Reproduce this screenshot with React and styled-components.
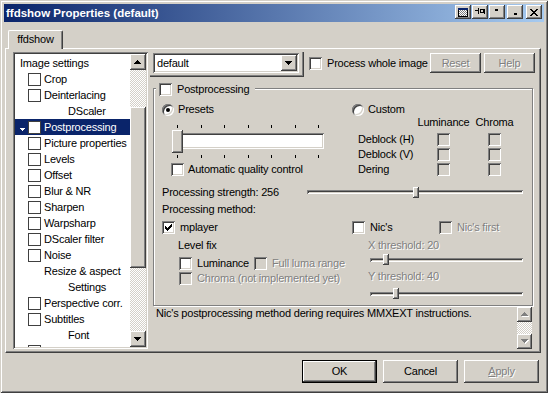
import React from "react";
import styled, { createGlobalStyle, css } from "styled-components";

const GlobalStyle = createGlobalStyle`
  * { box-sizing: border-box; }
  html, body { margin: 0; padding: 0; background: #d4d0c8; }
  body {
    font-family: "Liberation Sans", Arial, sans-serif;
    font-size: 11px;
    line-height: 13px;
    letter-spacing: -0.2px;
    color: #000;
  }
`;

const raised = css`
  background: #d4d0c8;
  box-shadow: inset -1px -1px #404040, inset 1px 1px #fff, inset -2px -2px #808080;
`;

const sunken = css`
  box-shadow: inset 1px 1px #808080, inset -1px -1px #fff, inset 2px 2px #404040,
    inset -2px -2px #d4d0c8;
`;

const disabledText = css`
  color: #808080;
  text-shadow: 1px 1px 0 #fff;
`;

const Window = styled.div`
  width: 548px;
  height: 393px;
  padding: 4px;
  background: #d4d0c8;
  box-shadow: inset 1px 1px #d4d0c8, inset -1px -1px #404040, inset 2px 2px #fff,
    inset -2px -2px #808080;
  display: flex;
  flex-direction: column;
`;

const TitleBar = styled.div`
  height: 18px;
  display: flex;
  align-items: flex-start;
  padding: 0 2px;
  background: linear-gradient(to right, #0a246a, #a6caf0);
`;

const TitleText = styled.div`
  flex: 1;
  color: #fff;
  font-weight: bold;
  font-size: 11.5px;
  line-height: 18px;
  letter-spacing: 0;
  white-space: nowrap;
`;

const TitleBtn = styled.div`
  width: 16px;
  height: 14px;
  margin-top: 1px;
  margin-left: ${p => p.$gap || 0}px;
  ${raised};
  display: flex;
  align-items: center;
  justify-content: center;
`;

const TabStrip = styled.div`
  display: flex;
  margin-top: 8px;
  padding-left: 4px;
  height: 18px;
  position: relative;
  z-index: 1;
`;

const Tab = styled.div`
  width: 55px;
  height: 19px;
  background: #d4d0c8;
  border-top: 1px solid #fff;
  border-left: 1px solid #fff;
  border-right: 1px solid #404040;
  box-shadow: inset -1px 0 #808080;
  border-radius: 2px 2px 0 0;
  display: flex;
  align-items: center;
  justify-content: center;
  padding-bottom: 1px;
`;

const TabPanel = styled.div`
  margin-left: 1px;
  width: 536px;
  height: 305px;
  border-top: 1px solid #fff;
  border-left: 1px solid #fff;
  border-right: 1px solid #404040;
  border-bottom: 1px solid #404040;
  box-shadow: inset -1px -1px #808080;
  display: flex;
  align-items: flex-start;
  padding: 3px 0 0 7px;
`;

/* ---------- left tree list ---------- */

const ListBox = styled.div`
  width: 135px;
  height: 297px;
  padding: 2px;
  background: #fff;
  ${sunken};
  display: flex;
`;

const ListItems = styled.div`
  flex: 1;
  padding-top: 1px;
  overflow: hidden;
  display: flex;
  flex-direction: column;
`;

const ListRow = styled.div`
  flex: none;
  height: 16px;
  display: flex;
  align-items: center;
  gap: 3px;
  padding-left: ${p => p.$indent}px;
  white-space: nowrap;
  background: ${p => (p.$selected ? "#0a246a" : "transparent")};
  color: ${p => (p.$selected ? "#fff" : "#000")};
`;

const ListCheck = styled.span`
  flex: none;
  width: 13px;
  height: 13px;
  background: #fff;
  border: 1px solid #404040;
`;

const SelArrow = styled.svg`
  flex: none;
  margin: 4px 0 0 0;
`;

const VScroll = styled.div`
  flex: none;
  width: ${p => p.$w}px;
  height: ${p => p.$h}px;
  margin-top: ${p => p.$top || 0}px;
  display: flex;
  flex-direction: column;
`;

const ScrollBtn = styled.div`
  flex: none;
  width: ${p => (p.$w ? `${p.$w}px` : "auto")};
  height: ${p => p.$h}px;
  ${raised};
  display: flex;
  align-items: center;
  justify-content: center;
`;

const Dither = styled.div`
  flex: ${p => (p.$h ? "none" : 1)};
  height: ${p => (p.$h ? `${p.$h}px` : "auto")};
  background-color: #fff;
  background-image: repeating-conic-gradient(#d4d0c8 0 25%, #fff 0 50%);
  background-size: 2px 2px;
`;

const ScrollThumb = styled.div`
  flex: none;
  height: ${p => p.$h}px;
  ${raised};
`;

/* ---------- right pane ---------- */

const RightPane = styled.div`
  margin-left: 2px;
  width: 386px;
  display: flex;
  flex-direction: column;
`;

const TopRow = styled.div`
  height: 25px;
  display: flex;
  align-items: flex-start;
  padding-right: 1px;
`;

const ComboFrame = styled.div`
  width: 154px;
  height: 25px;
  padding: 1px 0 0 3px;
  box-shadow: inset -1px -1px #404040, inset -2px -2px #808080;
`;

const Combo = styled.div`
  width: 146px;
  height: 20px;
  padding: 2px;
  background: #fff;
  ${sunken};
  display: flex;
  align-items: center;
`;

const ComboText = styled.span`
  flex: 1;
  padding-left: 2px;
`;

const SmallButton = styled.div`
  width: 51px;
  height: 20px;
  margin: 1px 0 0 ${p => p.$ml || "0"};
  ${raised};
  display: flex;
  align-items: center;
  justify-content: center;
  ${disabledText};
`;

const Check = styled.span`
  flex: none;
  width: 13px;
  height: 13px;
  background: ${p => (p.$off ? "#d4d0c8" : "#fff")};
  ${sunken};
  display: flex;
  align-items: center;
  justify-content: center;
`;

const Radio = styled.span`
  flex: none;
  width: 12px;
  height: 12px;
  border-radius: 50%;
  background: #fff;
  ${sunken};
  display: flex;
  align-items: center;
  justify-content: center;
  &::after {
    content: "";
    width: 4px;
    height: 4px;
    border-radius: 50%;
    background: ${p => (p.$on ? "#000" : "transparent")};
  }
`;

const Opt = styled.div`
  display: flex;
  align-items: center;
  gap: ${p => p.$gap ?? 5}px;
  height: 13px;
  white-space: nowrap;
  margin: ${p => p.$m || "0"};
  width: ${p => (p.$w ? `${p.$w}px` : "auto")};
  ${p => p.$off && disabledText};
`;

const Group = styled.div`
  position: relative;
  margin: 11px 0 0 3px;
  width: 380px;
  height: 218px;
  border: 1px solid #808080;
  box-shadow: inset 1px 1px #fff, 1px 1px #fff;
  padding: 14px 0 0 8px;
`;

const Legend = styled.div`
  position: absolute;
  top: -6px;
  left: 2px;
  display: flex;
  align-items: center;
  gap: 5px;
  height: 13px;
  padding: 0 6px 0 3px;
  background: #d4d0c8;
`;

const TwoCol = styled.div`
  display: grid;
  grid-template-columns: 190px 1fr;
  align-items: start;
  margin-top: ${p => p.$top || 0}px;
`;

const LeftBlock = styled.div`
  padding-left: ${p => p.$pad || 0}px;
  display: flex;
  flex-direction: column;
  align-items: flex-start;
`;

const OptPair = styled.div`
  display: flex;
  margin: 4px 0 0 17px;
`;

const PresetSlider = styled.div`
  margin-top: 8px;
  width: 152px;
  display: flex;
  flex-direction: column;
  gap: 2px;
`;

const Ticks = styled.div`
  height: 4px;
  padding: 0 5px;
  display: flex;
  justify-content: space-between;
  align-items: ${p => (p.$below ? "flex-start" : "flex-end")};
`;

const Tick = styled.span`
  width: 1px;
  height: 3px;
  background: #000;
`;

const SliderBody = styled.div`
  position: relative;
  height: 23px;
`;

const Well = styled.div`
  margin-top: 3px;
  height: 16px;
  background: #fff;
  ${sunken};
`;

const BigThumb = styled.div`
  position: absolute;
  top: 0;
  left: 0;
  width: 11px;
  height: 23px;
  ${raised};
`;

const DeblockGrid = styled.div`
  margin-left: 6px;
  display: grid;
  grid-template-columns: 60px 51px 51px;
  grid-template-rows: 16px 15px 15px 15px;
  align-items: center;
  white-space: nowrap;
`;

const ColHead = styled.span`
  align-self: start;
  justify-self: center;
`;

const Cell = styled.span`
  justify-self: center;
`;

const StrengthRow = styled.div`
  margin-top: 8px;
  height: 14px;
  display: grid;
  grid-template-columns: 145px 216px;
  align-items: center;
  white-space: nowrap;
`;

const Caption = styled.div`
  height: 14px;
  white-space: nowrap;
  margin: ${p => p.$m || "0"};
  ${p => p.$off && disabledText};
`;

const NicRow = styled.div`
  display: grid;
  grid-template-columns: 87px 1fr;
`;

const TrackBar = styled.div`
  position: relative;
  width: ${p => p.$w}px;
  height: 11px;
  margin: ${p => p.$m || "0"};
  display: flex;
  align-items: center;
`;

const Channel = styled.div`
  flex: 1;
  height: 4px;
  background: #d4d0c8;
  box-shadow: inset 1px 1px #808080, inset -1px -1px #fff, inset 2px 2px #404040;
`;

const SmallThumb = styled.div`
  position: absolute;
  top: 0;
  left: ${p => p.$at}px;
  width: 6px;
  height: 11px;
  ${raised};
`;

const Info = styled.div`
  margin-left: 3px;
  width: 379px;
  height: 44px;
  display: flex;
`;

const InfoText = styled.div`
  flex: 1;
  padding: 1px 0 0 3px;
  white-space: nowrap;
`;

const ButtonRow = styled.div`
  margin-top: 7px;
  display: flex;
  justify-content: flex-end;
  gap: 6px;
  padding-right: 5px;
`;

const DlgButton = styled.div`
  width: 75px;
  height: 23px;
  display: flex;
  align-items: center;
  justify-content: center;
  ${raised};
  ${p => p.$default && css`border: 1px solid #000;`}
  ${p => p.$off && disabledText};
  & u { text-decoration: underline; }
`;

/* ---------- little drawings ---------- */

const px = rows =>
  rows.flatMap((row, y) =>
    row.split("").map((c, x) => (c === "#" ? <rect key={`${x}-${y}`} x={x} y={y} width="1" height="1" /> : null))
  );

const TriUp = ["...#...", "..###..", ".#####.", "#######"];
const TriDown = [...TriUp].reverse();

const Tri = ({ down, off }) => {
  const rows = down ? TriDown : TriUp;
  return (
    <svg width="8" height="5" viewBox="0 0 8 5" shapeRendering="crispEdges">
      {off && <g fill="#fff" transform="translate(1 1)">{px(rows)}</g>}
      <g fill={off ? "#808080" : "#000"}>{px(rows)}</g>
    </svg>
  );
};

const CheckMark = () => (
  <svg width="7" height="7" viewBox="0 0 7 7" shapeRendering="crispEdges" fill="#000">
    {px(["......#", ".....##", "#...###", "##.###.", "#####..", ".###...", "..#...."])}
  </svg>
);

const OnTopIcon = () => (
  <svg width="10" height="9" viewBox="0 0 10 9" shapeRendering="crispEdges">
    <defs>
      <pattern id="dth" width="2" height="2" patternUnits="userSpaceOnUse">
        <rect width="2" height="2" fill="#fff" />
        <rect width="1" height="1" fill="#808080" />
        <rect x="1" y="1" width="1" height="1" fill="#808080" />
      </pattern>
    </defs>
    <rect x="0.5" y="0.5" width="9" height="8" fill="url(#dth)" stroke="#000" />
    <rect x="0" y="0" width="10" height="2" fill="#0a246a" />
  </svg>
);

const PinIcon = () => (
  <svg width="11" height="8" viewBox="0 0 11 8" shapeRendering="crispEdges" fill="#000">
    {px(["...#.....", "...#.####", "####.#..#", "...#.#..#", "...#.####", "...#....."])}
    <rect x="5" y="1" width="5" height="1" />
    <rect x="9" y="1" width="1" height="5" />
  </svg>
);

const RollIcon = () => (
  <svg width="8" height="8" viewBox="0 0 8 8" shapeRendering="crispEdges" fill="#000">
    <rect x="2" y="1" width="3" height="2" />
  </svg>
);

const MinIcon = () => (
  <svg width="8" height="8" viewBox="0 0 8 8" shapeRendering="crispEdges" fill="#000">
    <rect x="3" y="5" width="3" height="2" />
  </svg>
);

const CloseIcon = () => (
  <svg width="8" height="7" viewBox="0 0 8 7" shapeRendering="crispEdges" fill="#000">
    {px(["##....##", ".##..##.", "..####..", "...##...", "..####..", ".##..##.", "##....##"])}
  </svg>
);

const listItems = [
  { label: "Image settings", indent: 5 },
  { label: "Crop", check: true },
  { label: "Deinterlacing", check: true },
  { label: "DScaler", indent: 53 },
  { label: "Postprocessing", check: true, selected: true },
  { label: "Picture properties", check: true },
  { label: "Levels", check: true },
  { label: "Offset", check: true },
  { label: "Blur & NR", check: true },
  { label: "Sharpen", check: true },
  { label: "Warpsharp", check: true },
  { label: "DScaler filter", check: true },
  { label: "Noise", check: true },
  { label: "Resize & aspect", indent: 29 },
  { label: "Settings", indent: 53 },
  { label: "Perspective corr.", check: true },
  { label: "Subtitles", check: true },
  { label: "Font", indent: 53 },
  { label: "Avisynth", check: true },
];

const tickList = [0, 1, 2, 3, 4, 5, 6];

const App = () => {
  return (
    <Window>
      <GlobalStyle />
      <TitleBar>
        <TitleText>ffdshow Properties (default)</TitleText>
        <TitleBtn><OnTopIcon /></TitleBtn>
        <TitleBtn $gap={1}><PinIcon /></TitleBtn>
        <TitleBtn $gap={1}><RollIcon /></TitleBtn>
        <TitleBtn $gap={2}><MinIcon /></TitleBtn>
        <TitleBtn $gap={3}><CloseIcon /></TitleBtn>
      </TitleBar>

      <TabStrip>
        <Tab>ffdshow</Tab>
      </TabStrip>

      <TabPanel>
        <ListBox>
          <ListItems>
            {listItems.map(item => (
              <ListRow
                key={item.label}
                $selected={item.selected}
                $indent={item.selected ? 5 : item.check ? 13 : item.indent}
              >
                {item.selected && (
                  <SelArrow width="5" height="3" viewBox="0 0 5 3" shapeRendering="crispEdges" fill="#fff">
                    {px(["#####", ".###.", "..#.."])}
                  </SelArrow>
                )}
                {item.check && <ListCheck />}
                <span>{item.label}</span>
              </ListRow>
            ))}
          </ListItems>
          <VScroll $w={16} $h={293}>
            <ScrollBtn $h={16}><Tri /></ScrollBtn>
            <Dither $h={37} />
            <ScrollThumb $h={161} />
            <Dither />
            <ScrollBtn $h={16}><Tri down /></ScrollBtn>
          </VScroll>
        </ListBox>

        <RightPane>
          <TopRow>
            <ComboFrame>
              <Combo>
                <ComboText>default</ComboText>
                <ScrollBtn $w={16} $h={16}><Tri down /></ScrollBtn>
              </Combo>
            </ComboFrame>
            <Opt $m="5px 0 0 5px"><Check />Process whole image</Opt>
            <SmallButton $ml="auto">Reset</SmallButton>
            <SmallButton $ml="3px">Help</SmallButton>
          </TopRow>

          <Group>
            <Legend><Check />Postprocessing</Legend>

            <TwoCol>
              <Opt $gap={4}><Radio $on />Presets</Opt>
              <Opt $gap={4}><Radio />Custom</Opt>
            </TwoCol>

            <TwoCol>
              <LeftBlock $pad={10}>
                <PresetSlider>
                  <Ticks>{tickList.map(t => <Tick key={t} />)}</Ticks>
                  <SliderBody>
                    <Well />
                    <BigThumb />
                  </SliderBody>
                  <Ticks $below>{tickList.map(t => <Tick key={t} />)}</Ticks>
                </PresetSlider>
                <Opt $gap={4} $m="4px 0 0 -1px"><Check />Automatic quality control</Opt>
              </LeftBlock>
              <DeblockGrid>
                <span />
                <ColHead>Luminance</ColHead>
                <ColHead>Chroma</ColHead>
                <span>Deblock (H)</span>
                <Cell><Check $off /></Cell>
                <Cell><Check $off /></Cell>
                <span>Deblock (V)</span>
                <Cell><Check $off /></Cell>
                <Cell><Check $off /></Cell>
                <span>Dering</span>
                <Cell><Check $off /></Cell>
                <Cell><Check $off /></Cell>
              </DeblockGrid>
            </TwoCol>

            <StrengthRow>
              <span>Processing strength: 256</span>
              <TrackBar $w={216}>
                <Channel />
                <SmallThumb $at={106} />
              </TrackBar>
            </StrengthRow>

            <Caption $m="4px 0 0 0">Processing method:</Caption>

            <TwoCol $top={4}>
              <Opt><Check><CheckMark /></Check>mplayer</Opt>
              <NicRow>
                <Opt><Check />Nic's</Opt>
                <Opt $off><Check $off />Nic's first</Opt>
              </NicRow>
            </TwoCol>

            <TwoCol $top={5}>
              <LeftBlock>
                <Caption $m="0 0 0 16px">Level fix</Caption>
                <OptPair>
                  <Opt $w={75}><Check />Luminance</Opt>
                  <Opt $off><Check $off />Full luma range</Opt>
                </OptPair>
                <Opt $off $m="2px 0 0 17px"><Check $off />Chroma (not implemented yet)</Opt>
              </LeftBlock>
              <LeftBlock>
                <Caption $off $m="0 0 0 16px">X threshold: 20</Caption>
                <TrackBar $w={153} $m="1px 0 0 18px">
                  <Channel />
                  <SmallThumb $at={13} />
                </TrackBar>
                <Caption $off $m="5px 0 0 16px">Y threshold: 40</Caption>
                <TrackBar $w={153} $m="4px 0 0 18px">
                  <Channel />
                  <SmallThumb $at={23} />
                </TrackBar>
              </LeftBlock>
            </TwoCol>
          </Group>

          <Info>
            <InfoText>Nic's postprocessing method dering requires MMXEXT instructions.</InfoText>
            <VScroll $w={15} $h={42} $top={1}>
              <ScrollBtn $h={15}><Tri off /></ScrollBtn>
              <Dither />
              <ScrollBtn $h={15}><Tri down off /></ScrollBtn>
            </VScroll>
          </Info>
        </RightPane>
      </TabPanel>

      <ButtonRow>
        <DlgButton $default>OK</DlgButton>
        <DlgButton>Cancel</DlgButton>
        <DlgButton $off><span><u>A</u>pply</span></DlgButton>
      </ButtonRow>
    </Window>
  );
};

export default App;
